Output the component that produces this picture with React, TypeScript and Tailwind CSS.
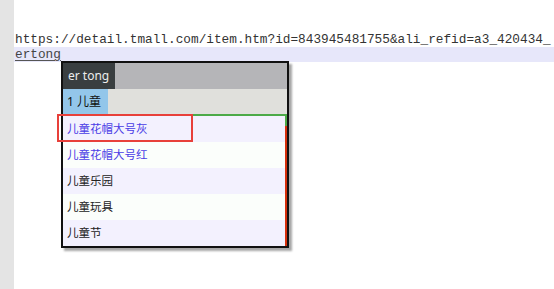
import React from "react";

const items = [
  { t: "儿童花帽大号灰", blue: true },
  { t: "儿童花帽大号红", blue: true },
  { t: "儿童乐园", blue: false },
  { t: "儿童玩具", blue: false },
  { t: "儿童节", blue: false },
];

export default function App() {
  const sans = { fontFamily: '"Noto Sans", "Noto Sans CJK SC", sans-serif' };
  return (
    <div className="relative w-[554px] h-[289px] overflow-hidden bg-white flex">
      <div className="w-[14px] h-full bg-[#e4e4e4] shrink-0" />
      <div className="flex-1 pt-[32px] min-w-0">
        <div
          className="h-[15px] leading-[15px] text-[12.75px] text-[#333] whitespace-nowrap pl-[1px]"
          style={{ fontFamily: '"Liberation Mono", monospace' }}
        >
          https://detail.tmall.com/item.htm?id=843945481755&amp;ali_refid=a3_420434_
        </div>
        <div
          className="h-[15px] leading-[15px] text-[12.75px] text-[#444] bg-[#e7e7fa] whitespace-nowrap pl-[1px]"
          style={{ fontFamily: '"Liberation Mono", monospace' }}
        >
          <span className="underline decoration-[#555] underline-offset-2">ertong</span>
        </div>
      </div>

      {/* popup */}
      <div
        className="absolute left-[61px] top-[61px] w-[228px] border-2 border-[#111] bg-white shadow-[3px_3px_2px_rgba(0,0,0,0.35)] flex flex-col"
        style={sans}
      >
        <div className="h-[26px] flex bg-[#b5b5b8]">
          <div className="w-[52px] bg-[#393e40] text-[#ececec] text-[12px] leading-[26px] pl-[5px]">er tong</div>
        </div>
        <div className="h-[25px] flex bg-[#e0e0dc]">
          <div className="w-[45px] bg-[#93c6ea] text-[#111] text-[12px] leading-[25px] pl-[4px]">1 儿童</div>
        </div>
        <div className="relative border-t-2 border-[#4caa48] border-r-2 border-r-[#d6300c]">
          <div className="absolute right-[-2px] top-[-2px] w-[2px] h-[12px] bg-[#4caa48]" />
          {items.map((it, i) => (
            <div
              key={i}
              className={`h-[26px] leading-[26px] pl-[4px] text-[11.5px] ${
                i % 2 === 0 ? "bg-[#f3f1fe]" : "bg-[#fbfefb]"
              } ${it.blue ? "text-[#4a3de6]" : "text-[#222]"}`}
            >
              {it.t}
            </div>
          ))}
        </div>
      </div>

      {/* red highlight */}
      <div className="absolute left-[57px] top-[114px] w-[136px] h-[28px] border-2 border-[#e8403a]" />
    </div>
  );
}
